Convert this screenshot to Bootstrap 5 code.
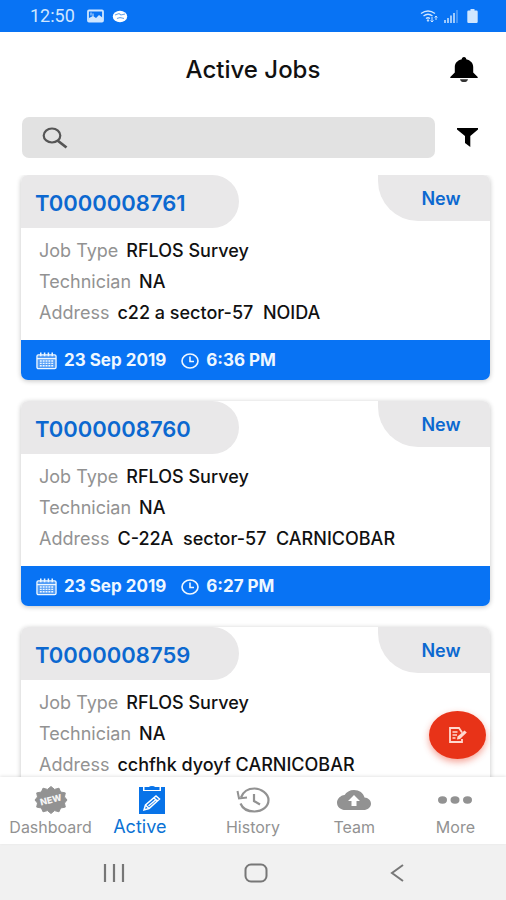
<!DOCTYPE html>
<html lang="en">
<head>
<meta charset="utf-8">
<meta name="viewport" content="width=device-width, initial-scale=1">
<title>Active Jobs</title>
<link href="https://cdn.jsdelivr.net/npm/bootstrap@5.3.0/dist/css/bootstrap.min.css" rel="stylesheet">
<style>
  :root { --brand: #0873f4; --link: #0c68d0; --tab: #e9e8e9; --muted: #929292; }
  body { font-family: Inter, "Open Sans", sans-serif; color: #111; background: #fff; }
  svg { display: block; flex: none; }
  .status-bar { background: var(--brand); color: #cfe6ff; height: 32px; padding: 0 28px 0 30px; font: 18px/32px Roboto, sans-serif; }
  .app-header { height: 76px; padding: 0 28px; }
  .app-title { font-size: 24px; line-height: 28px; font-weight: 500; color: #111; padding-left: 28px; }
  .icon-btn { border: 0; background: none; padding: 0; color: #000; }
  .search-row { padding: 9px 28px 17px 22px; gap: 22px; }
  .search-box { background: #e2e2e2; border-radius: 7px; height: 41px; padding: 0 20px; color: #555; }
  .search-box input { background: transparent; border: 0; outline: 0; font-size: 18px; min-width: 0; }
  .job-list { padding: 0 16px 0 21px; min-height: 0; }
  .job-card { border-radius: 7px; background: #fff; box-shadow: 0 1px 5px rgba(0,0,0,.24); margin-bottom: 21px; overflow: hidden; flex: none; }
  .job-id { background: var(--tab); color: var(--link); width: 218px; height: 53px; padding: 2px 0 0 14px; border-radius: 0 32px 32px 0; font-size: 22px; line-height: 53px; font-weight: 600; }
  .job-state { background: var(--tab); color: var(--link); width: 112px; height: 46px; padding-left: 14px; border-radius: 0 0 0 40px; font-size: 18px; line-height: 48px; font-weight: 600; }
  .job-info { padding: 7px 18px 12px; font-size: 18px; line-height: 31px; }
  .job-info dt { font-weight: 400; color: var(--muted); margin-right: 8px; }
  .job-info dd { font-weight: 500; margin: 0; white-space: pre; }
  .job-when { background: var(--brand); color: #eef7ff; height: 40px; padding: 2px 15px 0; gap: 7px; font-size: 17px; font-weight: 700; }
  .fab { right: 20px; bottom: 18px; width: 57px; height: 48px; border: 0; border-radius: 50%; background: #e83318; color: #ffd9cf; box-shadow: 0 3px 7px rgba(232,51,24,.45); }
  .tab-bar { background: #fff; height: 67px; box-shadow: 0 -1px 3px rgba(0,0,0,.1); z-index: 1; }
  .tab-bar a { color: var(--muted); text-decoration: none; font-size: 16px; line-height: 20px; padding-top: 9px; gap: 3px; flex: 1 1 0; min-width: 0; }
  .tab-bar a.active { color: #0b72d4; font-size: 18px; }
  .tab-bar a.active span { padding-right: 24px; }
  .tab-icon { height: 28px; }
  .system-bar { background: #f1f1f1; color: #777; height: 56px; padding: 2px 38px 0 43px; }
  .system-bar button { border: 0; background: none; color: inherit; padding: 0; flex: 1; }
</style>
</head>
<body>
<svg width="0" height="0" class="position-absolute" aria-hidden="true">
  <symbol id="calendar" viewBox="0 0 22 18"><g fill="none" stroke="currentColor" stroke-width="1.4"><rect x="1" y="2.5" width="20" height="14.5" rx="1.5" fill="#fff" fill-opacity=".3"/><path d="M1 6.5h20"/><path d="M5 0v4M9 0v4M13 0v4M17 0v4" stroke-width="1.6"/><path d="M4 9h14M4 11.5h14M4 14h14" stroke-dasharray="2 1" stroke-width="1.5"/></g></symbol>
  <symbol id="clock" viewBox="0 0 18 16"><g fill="none" stroke="currentColor" stroke-width="1.6"><ellipse cx="9" cy="8" rx="8" ry="7"/><path d="M9 3.5V8.500H13"/></g></symbol>
</svg>

<div class="d-flex flex-column vh-100 overflow-hidden">
  <div class="status-bar d-flex align-items-center flex-shrink-0">
    <span class="me-2">12:50</span>
    <svg class="ms-1" width="17" height="14" viewBox="0 0 17 14" fill="none" stroke="currentColor"><rect x="1" y="1.500" width="15" height="11" rx="1" stroke-width="1.8"/><path d="M2 12V9l4-2 3 2 3-3 4 3v3z" fill="currentColor" stroke="none"/><path d="M4 3.500v3M6 4.500v3" /></svg>
    <svg class="ms-2" width="16" height="13" viewBox="0 0 16 13"><ellipse cx="8" cy="6.500" rx="7.200" ry="5.800" fill="#fff"/><path d="M3 5l4-1.500 2 1.500 4-1M5 8.500l3-1 4 1" fill="none" stroke="#6aa6ea" stroke-width="1.100"/></svg>
    <span class="ms-auto d-flex align-items-center gap-1">
      <svg width="20" height="15" viewBox="0 0 20 15" fill="none" stroke="currentColor" stroke-width="1.300"><path d="M1 4.500q7-5 14 0M3.500 7q4.500-3.500 9 0M6 9.500q2-1.500 4 0" /><path d="M7 11h2l-1 1.500zM12 8v5m-1.500-1.500L12 13l1.500-1.500M16 11V7m-1.300 1.500L16 7l1.300 1.500" stroke-width="1"/></svg>
      <svg width="15" height="13" viewBox="0 0 15 13" fill="currentColor" opacity=".75"><path d="M0 10h2v3H0zM3 8h2v5H3zM6 5.500h2V13H6zM9 3h2v10H9z"/><path d="M12 0h2v13h-2z" opacity=".4"/></svg>
      <svg class="ms-1" width="11" height="14" viewBox="0 0 11 14" fill="currentColor"><path d="M3.500 0h4v1.500H9.500q1.200 0 1.200 1.200v10q0 1.300-1.200 1.300h-8Q.3 14 .3 12.700v-10q0-1.200 1.200-1.200h2z"/></svg>
    </span>
  </div>

  <header class="app-header d-flex align-items-center flex-shrink-0">
    <h1 class="app-title my-0 flex-fill text-center">Active Jobs</h1>
    <button class="icon-btn" type="button" aria-label="Notifications">
      <svg width="28" height="26" viewBox="0 0 28 26" fill="currentColor"><path d="M14 0c-1.500 0-2.200 1-2.200 2.200C7.500 3.300 4.800 6 4.800 10v5.500L.3 20v1h27.400v-1L23.200 15.500V10c0-4-2.700-6.700-7-7.800C16.200 1 15.500 0 14 0z"/><path d="M10 22.300h8c-.3 2-2 2.800-4 2.800s-3.700-.8-4-2.800z" fill="#333"/></svg>
    </button>
  </header>

  <form class="search-row d-flex align-items-center flex-shrink-0" role="search">
    <label class="search-box d-flex align-items-center flex-fill gap-2" for="job-search">
      <svg width="26" height="22" viewBox="0 0 26 22" fill="none" stroke="currentColor"><ellipse cx="10" cy="8.500" rx="8.300" ry="7" stroke-width="2.200"/><path d="M15.500 13.500l9 7" stroke-width="2.800"/></svg>
      <input class="flex-fill" id="job-search" type="text" aria-label="Search jobs">
    </label>
    <button class="icon-btn" type="button" aria-label="Filter">
      <svg width="21" height="19" viewBox="0 0 21 19" fill="currentColor"><path d="M0 0h21v1.500L13.300 8V19L8 15V8L0 1.500z"/></svg>
    </button>
  </form>

  <div class="position-relative flex-fill d-flex flex-column overflow-hidden">
    <main class="job-list d-flex flex-column flex-fill">
      <article class="job-card">
        <div class="d-flex justify-content-between align-items-start">
          <h2 class="job-id m-0">T0000008761</h2>
          <span class="job-state text-center">New</span>
        </div>
        <dl class="job-info m-0">
          <div class="d-flex"><dt>Job Type</dt><dd>RFLOS Survey</dd></div>
          <div class="d-flex"><dt>Technician</dt><dd>NA</dd></div>
          <div class="d-flex"><dt>Address</dt><dd>c22 a sector-57  NOIDA</dd></div>
        </dl>
        <div class="job-when d-flex align-items-center">
          <svg width="21" height="18"><use href="#calendar"/></svg><time>23 Sep 2019</time>
          <svg class="ms-2" width="18" height="16"><use href="#clock"/></svg><time>6:36 PM</time>
        </div>
      </article>

      <article class="job-card">
        <div class="d-flex justify-content-between align-items-start">
          <h2 class="job-id m-0">T0000008760</h2>
          <span class="job-state text-center">New</span>
        </div>
        <dl class="job-info m-0">
          <div class="d-flex"><dt>Job Type</dt><dd>RFLOS Survey</dd></div>
          <div class="d-flex"><dt>Technician</dt><dd>NA</dd></div>
          <div class="d-flex"><dt>Address</dt><dd>C-22A  sector-57  CARNICOBAR</dd></div>
        </dl>
        <div class="job-when d-flex align-items-center">
          <svg width="21" height="18"><use href="#calendar"/></svg><time>23 Sep 2019</time>
          <svg class="ms-2" width="18" height="16"><use href="#clock"/></svg><time>6:27 PM</time>
        </div>
      </article>

      <article class="job-card">
        <div class="d-flex justify-content-between align-items-start">
          <h2 class="job-id m-0">T0000008759</h2>
          <span class="job-state text-center">New</span>
        </div>
        <dl class="job-info m-0">
          <div class="d-flex"><dt>Job Type</dt><dd>RFLOS Survey</dd></div>
          <div class="d-flex"><dt>Technician</dt><dd>NA</dd></div>
          <div class="d-flex"><dt>Address</dt><dd>cchfhk dyoyf CARNICOBAR</dd></div>
        </dl>
      </article>
    </main>
    <button class="fab position-absolute d-flex align-items-center justify-content-center" type="button" aria-label="New job">
      <svg width="18" height="16" viewBox="0 0 18 16" fill="none" stroke="currentColor" stroke-width="1.800"><path d="M13 5.500L10 1H1v14h12v-3"/><path d="M3.500 5h5M3.500 8h4.500M3.500 11h3" stroke-width="1.600"/><path d="M8 12.500l.5-3L15.500 3.500l2.300 2-6.800 6.500z" fill="currentColor" stroke="none"/></svg>
    </button>
  </div>

  <nav class="tab-bar d-flex flex-shrink-0" aria-label="Main">
    <a class="d-flex flex-column align-items-center" href="#dashboard">
      <span class="tab-icon d-flex align-items-center"><svg width="34" height="28" viewBox="0 0 34 28"><path fill="#929292" stroke="#929292" stroke-linejoin="round" d="M17 .5l3.500 2.900 4.500-1.200 1.600 3.800 4.700.9-.8 4L33 14l-2.500 3.100.8 4-4.700.9-1.600 3.800-4.500-1.200L17 27.500l-3.500-2.900L9 25.800 7.400 22l-4.700-.9.800-4L1 14l2.500-3.100-.8-4L7.400 6 9 2.200l4.500 1.200z"/><text x="17" y="17" text-anchor="middle" font-family="Inter, sans-serif" font-size="9" font-weight="800" fill="#f5f5f5" transform="rotate(-14 17 14)">NEW</text></svg></span>
      <span>Dashboard</span>
    </a>
    <a class="active d-flex flex-column align-items-center" href="#active" aria-current="page">
      <span class="tab-icon d-flex align-items-center p-0"><svg width="26" height="28" viewBox="0 0 26 28"><path fill="#0873e8" d="M0 1h4v4h18V1h4v27H0zM5.500 1H10q.5-1 3-1t3 1h4.500v3h-15z"/><path fill="none" stroke="#fff" stroke-width="1.500" d="M5 24l1.500-5L17 10l3.500 3L10 22.500zM15 12l3.500 3M6.500 19L10 22.500M9.500 20l7-6"/></svg></span>
      <span>Active</span>
    </a>
    <a class="d-flex flex-column align-items-center" href="#history">
      <span class="tab-icon d-flex align-items-center"><svg width="34" height="26" viewBox="0 0 34 26" fill="none" stroke="currentColor" stroke-width="2.200"><path d="M5 10.500C7 5 12 1.500 18.500 1.500S32.500 6.500 32.500 13s-6 11.500-14 11.500C12 24.500 6.500 21.500 4.500 16.500"/><path d="M1.500 4l1.500 7.500 8-1" stroke-width="2"/><path d="M18 7v7l6 3.500"/></svg></span>
      <span>History</span>
    </a>
    <a class="d-flex flex-column align-items-center" href="#team">
      <span class="tab-icon d-flex align-items-center"><svg width="34" height="20" viewBox="0 0 34 20"><path fill="currentColor" d="M27.500 7.500C26.500 3 22.300 0 17 0c-4.200 0-7.700 2-9.400 5C3.300 5.500 0 8.800 0 12.700 0 17 3.800 20 8.500 20h18c4 0 7.500-2.700 7.500-6.300 0-3.300-2.900-6-6.500-6.200z"/><path fill="#fff" d="M17 5l6 6h-3.500v5h-5v-5H11z"/></svg></span>
      <span>Team</span>
    </a>
    <a class="d-flex flex-column align-items-center" href="#more">
      <span class="tab-icon d-flex align-items-center"><svg width="34" height="8" viewBox="0 0 34 8" fill="currentColor"><ellipse cx="4.500" cy="4" rx="4.500" ry="3.700"/><ellipse cx="17" cy="4" rx="4.500" ry="3.700"/><ellipse cx="29.500" cy="4" rx="4.500" ry="3.700"/></svg></span>
      <span>More</span>
    </a>
  </nav>

  <div class="system-bar d-flex align-items-center flex-shrink-0">
    <button type="button" aria-label="Recent apps"><svg class="mx-auto" width="22" height="18" viewBox="0 0 22 18" stroke="currentColor" stroke-width="2.200"><path d="M2 0v18M11 0v18M20 0v18"/></svg></button>
    <button type="button" aria-label="Home"><svg class="mx-auto" width="24" height="20" viewBox="0 0 24 20" fill="none" stroke="currentColor" stroke-width="2"><rect x="1.500" y="1.500" width="21" height="17" rx="5.500"/></svg></button>
    <button type="button" aria-label="Back"><svg class="mx-auto" width="14" height="18" viewBox="0 0 14 18" fill="none" stroke="currentColor" stroke-width="2"><path d="M13 1L2 9l11 8"/></svg></button>
  </div>
</div>
<script src="https://cdn.jsdelivr.net/npm/bootstrap@5.3.0/dist/js/bootstrap.bundle.min.js"></script>
</body>
</html>
